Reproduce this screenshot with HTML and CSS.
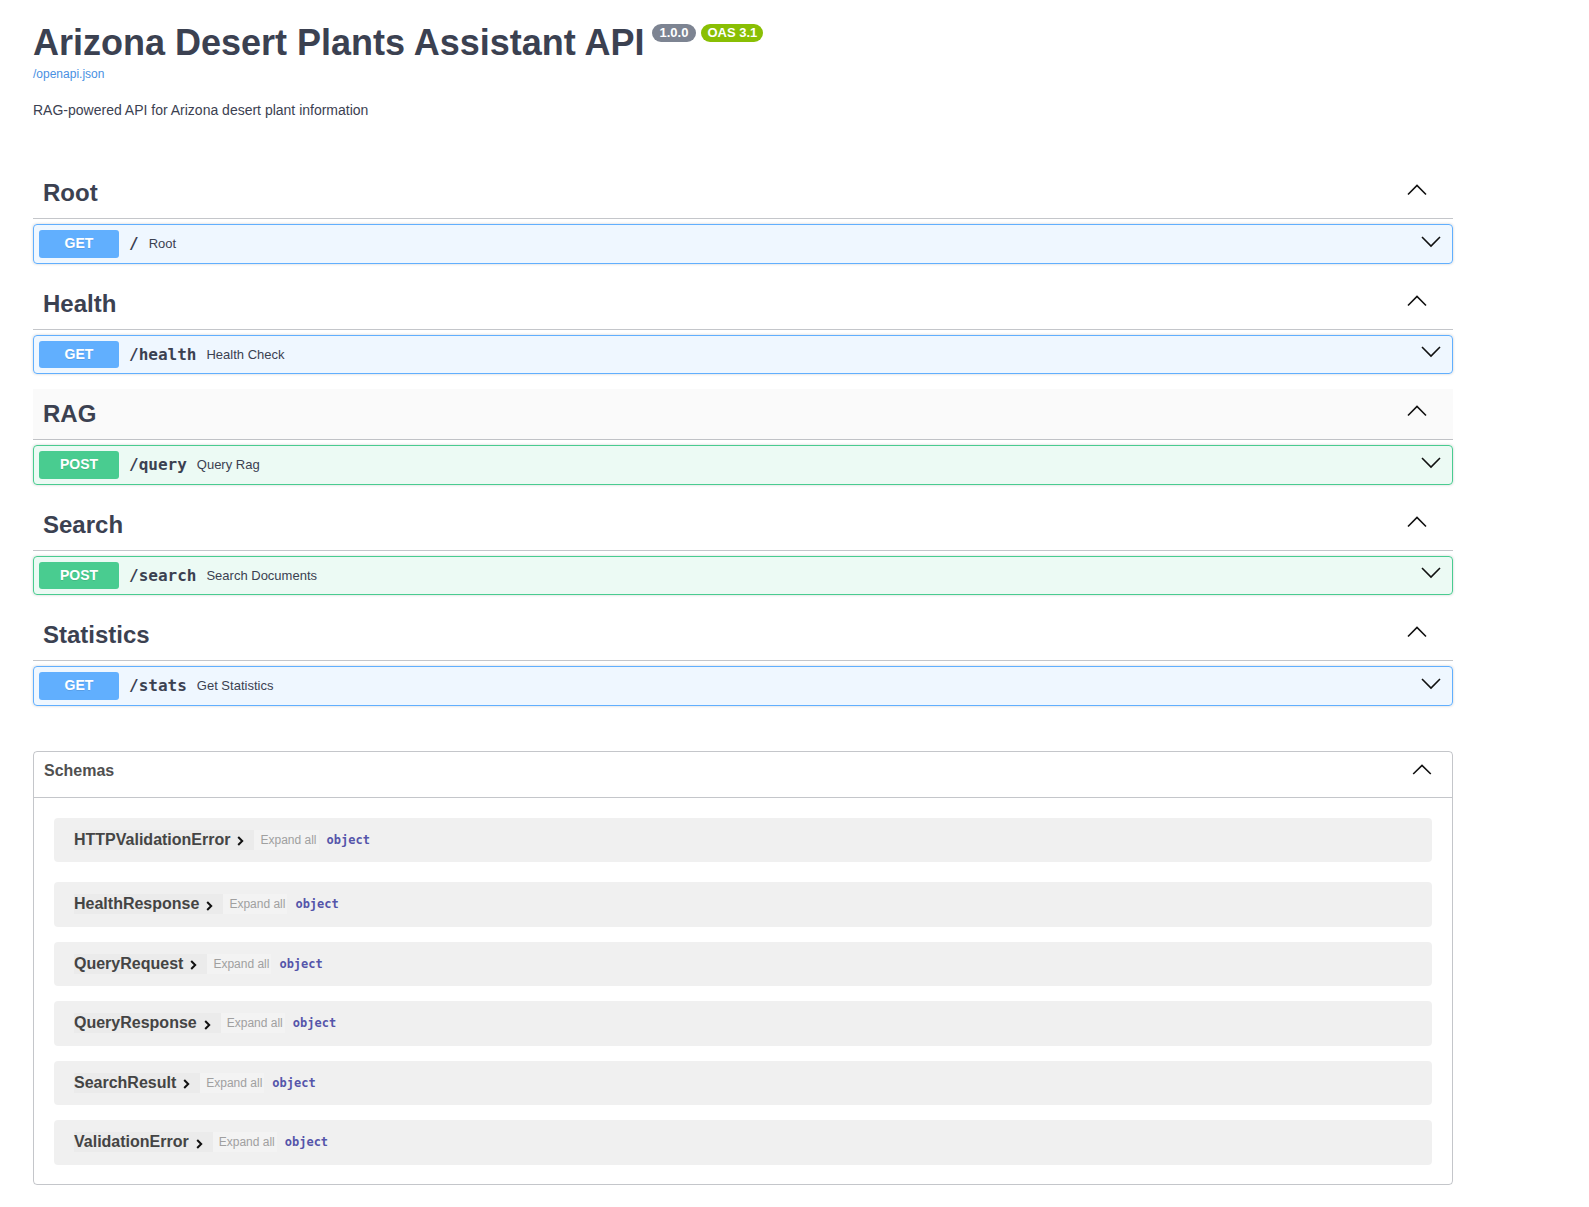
FILE: index.html
```html
<!DOCTYPE html>
<html lang="en">
<head>
<meta charset="utf-8">
<title>Arizona Desert Plants Assistant API - Swagger UI</title>
<link rel="stylesheet" href="styles.css">
</head>
<body>
<div class="wrapper">
  <header class="info">
    <div class="title-row">
      <h2 class="title">Arizona Desert Plants Assistant API</h2>
      <span class="badge badge-version">1.0.0</span>
      <span class="badge badge-oas">OAS 3.1</span>
    </div>
    <a class="spec-link" href="#">/openapi.json</a>
    <p class="description">RAG-powered API for Arizona desert plant information</p>
  </header>

  <div class="tags">
    <section class="tag-section">
      <h3 class="tag"><span class="tag-name">Root</span><svg class="tag-arrow" width="20" height="20" viewBox="0 0 20 20"><polyline points="1,11.5 10,2.5 19,11.5"/></svg></h3>
      <div class="opblock opblock-get">
        <span class="method">GET</span><span class="path">/</span><span class="summary">Root</span>
        <svg class="op-arrow" width="20" height="20" viewBox="0 0 20 20"><polyline points="1,3 10,12 19,3"/></svg>
      </div>
    </section>

    <section class="tag-section">
      <h3 class="tag"><span class="tag-name">Health</span><svg class="tag-arrow" width="20" height="20" viewBox="0 0 20 20"><polyline points="1,11.5 10,2.5 19,11.5"/></svg></h3>
      <div class="opblock opblock-get">
        <span class="method">GET</span><span class="path">/health</span><span class="summary">Health Check</span>
        <svg class="op-arrow" width="20" height="20" viewBox="0 0 20 20"><polyline points="1,3 10,12 19,3"/></svg>
      </div>
    </section>

    <section class="tag-section">
      <h3 class="tag tag-hover"><span class="tag-name">RAG</span><svg class="tag-arrow" width="20" height="20" viewBox="0 0 20 20"><polyline points="1,11.5 10,2.5 19,11.5"/></svg></h3>
      <div class="opblock opblock-post">
        <span class="method">POST</span><span class="path">/query</span><span class="summary">Query Rag</span>
        <svg class="op-arrow" width="20" height="20" viewBox="0 0 20 20"><polyline points="1,3 10,12 19,3"/></svg>
      </div>
    </section>

    <section class="tag-section">
      <h3 class="tag"><span class="tag-name">Search</span><svg class="tag-arrow" width="20" height="20" viewBox="0 0 20 20"><polyline points="1,11.5 10,2.5 19,11.5"/></svg></h3>
      <div class="opblock opblock-post">
        <span class="method">POST</span><span class="path">/search</span><span class="summary">Search Documents</span>
        <svg class="op-arrow" width="20" height="20" viewBox="0 0 20 20"><polyline points="1,3 10,12 19,3"/></svg>
      </div>
    </section>

    <section class="tag-section">
      <h3 class="tag"><span class="tag-name">Statistics</span><svg class="tag-arrow" width="20" height="20" viewBox="0 0 20 20"><polyline points="1,11.5 10,2.5 19,11.5"/></svg></h3>
      <div class="opblock opblock-get">
        <span class="method">GET</span><span class="path">/stats</span><span class="summary">Get Statistics</span>
        <svg class="op-arrow" width="20" height="20" viewBox="0 0 20 20"><polyline points="1,3 10,12 19,3"/></svg>
      </div>
    </section>
  </div>

  <section class="models">
    <h4 class="models-header"><span class="models-title">Schemas</span><svg class="models-arrow" width="20" height="20" viewBox="0 0 20 20"><polyline points="1.2,12 10,3.4 18.8,12"/></svg></h4>
    <div class="models-list">
      <div class="model">
        <span class="model-name">HTTPValidationError<svg class="model-toggle" width="7" height="10" viewBox="0 0 7 10"><polyline points="1.2,1 5.2,5 1.2,9"/></svg></span><span class="expand-all">Expand all</span><span class="model-type">object</span>
      </div>
      <div class="model">
        <span class="model-name">HealthResponse<svg class="model-toggle" width="7" height="10" viewBox="0 0 7 10"><polyline points="1.2,1 5.2,5 1.2,9"/></svg></span><span class="expand-all">Expand all</span><span class="model-type">object</span>
      </div>
      <div class="model">
        <span class="model-name">QueryRequest<svg class="model-toggle" width="7" height="10" viewBox="0 0 7 10"><polyline points="1.2,1 5.2,5 1.2,9"/></svg></span><span class="expand-all">Expand all</span><span class="model-type">object</span>
      </div>
      <div class="model">
        <span class="model-name">QueryResponse<svg class="model-toggle" width="7" height="10" viewBox="0 0 7 10"><polyline points="1.2,1 5.2,5 1.2,9"/></svg></span><span class="expand-all">Expand all</span><span class="model-type">object</span>
      </div>
      <div class="model">
        <span class="model-name">SearchResult<svg class="model-toggle" width="7" height="10" viewBox="0 0 7 10"><polyline points="1.2,1 5.2,5 1.2,9"/></svg></span><span class="expand-all">Expand all</span><span class="model-type">object</span>
      </div>
      <div class="model">
        <span class="model-name">ValidationError<svg class="model-toggle" width="7" height="10" viewBox="0 0 7 10"><polyline points="1.2,1 5.2,5 1.2,9"/></svg></span><span class="expand-all">Expand all</span><span class="model-type">object</span>
      </div>
    </div>
  </section>
</div>
</body>
</html>
```

FILE: styles.css
```css
* {
  box-sizing: border-box;
}

html, body {
  margin: 0;
  padding: 0;
  background: #fff;
}

body {
  font-family: "Liberation Sans", Arial, Helvetica, sans-serif;
  color: #3b4151;
}

.wrapper {
  width: 1420px;
  margin-left: 33px;
  padding-top: 21px;
  padding-bottom: 20px;
}

/* ---------- info header ---------- */
.title-row {
  display: flex;
  align-items: flex-start;
}

.title {
  margin: 0;
  font-size: 36px;
  line-height: 44px;
  font-weight: 700;
  color: #3b4151;
}

.badge {
  display: inline-flex;
  align-items: center;
  height: 18px;
  margin-top: 3px;
  border-radius: 57px;
  color: #fff;
  font-size: 13px;
  font-weight: 700;
  line-height: 18px;
}

.badge-version {
  margin-left: 7px;
  padding: 0 8px;
  background: #7d8492;
}

.badge-oas {
  margin-left: 5px;
  padding: 0 6px;
  background: #89bf04;
}

.spec-link {
  display: block;
  margin-top: 2px;
  font-size: 12px;
  line-height: 15px;
  color: #4990e2;
  text-decoration: none;
}

.description {
  margin: 18px 0 0;
  font-size: 14px;
  line-height: 20px;
  color: #3b4151;
}

/* ---------- tag sections ---------- */
.tags {
  margin-top: 48px;
}

.tag-section {
  display: flex;
  flex-direction: column;
}

.tag {
  display: flex;
  align-items: center;
  margin: 0 0 5px;
  padding: 10px 26px 10px 10px;
  border-bottom: 1px solid rgba(59, 65, 81, 0.3);
  font-size: 24px;
  line-height: 30px;
  font-weight: 700;
  color: #3b4151;
}

.tag-hover {
  background: rgba(0, 0, 0, 0.02);
}

.tag-name {
  flex: 1;
}

.tag-arrow,
.op-arrow,
.models-arrow {
  flex: none;
  fill: none;
  stroke: #111;
  stroke-width: 1.6;
}

.opblock {
  display: flex;
  align-items: center;
  height: 39.5px;
  margin: 0 0 15px;
  padding: 0 5px;
  border: 1px solid;
  border-radius: 4px;
  box-shadow: 0 0 3px rgba(0, 0, 0, 0.19);
}

.opblock-get {
  background: rgba(97, 175, 254, 0.1);
  border-color: #61affe;
}

.opblock-post {
  background: rgba(73, 204, 144, 0.1);
  border-color: #49cc90;
}

.method {
  flex: none;
  width: 80px;
  height: 27.5px;
  border-radius: 3px;
  color: #fff;
  font-size: 14px;
  font-weight: 700;
  line-height: 27.5px;
  text-align: center;
  text-shadow: 0 1px 0 rgba(0, 0, 0, 0.1);
}

.opblock-get .method {
  background: #61affe;
}

.opblock-post .method {
  background: #49cc90;
}

.path {
  padding: 0 10px;
  font-family: "DejaVu Sans Mono", "Liberation Mono", monospace;
  font-size: 16px;
  font-weight: 700;
  color: #3b4151;
}

.summary {
  flex: 1;
  font-size: 13px;
  color: #3b4151;
}

.op-arrow {
  margin-right: 6px;
}

/* ---------- models ---------- */
.models {
  margin-top: 30px;
  border: 1px solid rgba(59, 65, 81, 0.3);
  border-radius: 4px;
}

.models-header {
  display: flex;
  align-items: center;
  height: 46px;
  margin: 0;
  padding: 0 20px 0 10px;
  border-bottom: 1px solid rgba(59, 65, 81, 0.3);
  font-size: 16px;
  font-weight: 700;
  color: #505050;
}

.models-title {
  flex: 1;
  line-height: 20px;
  margin-bottom: 6px;
}

.models-arrow {
  margin-bottom: 4px;
}

.models-list {
  padding: 20px 20px 4px;
}

.model {
  display: flex;
  align-items: center;
  height: 44.5px;
  margin-bottom: 15px;
  padding: 0 20px;
  border-radius: 4px;
  background: rgba(0, 0, 0, 0.06);
}

.model:first-child {
  margin-bottom: 20px;
}

.model-name {
  display: inline-flex;
  align-items: center;
  height: 20px;
  padding-right: 10px;
  background: rgba(0, 0, 0, 0.02);
  font-size: 16px;
  line-height: 20px;
  font-weight: 700;
  color: #444;
}

.model-toggle {
  margin-left: 7px;
  margin-top: 3px;
  fill: none;
  stroke: #111;
  stroke-width: 2;
}

.expand-all {
  height: 20px;
  padding: 0 2px 0 6px;
  background: rgba(255, 255, 255, 0.2);
  font-size: 12px;
  line-height: 20px;
  color: #a0a0a0;
}

.model-type {
  margin-left: 8px;
  font-family: "DejaVu Sans Mono", "Liberation Mono", monospace;
  font-size: 12px;
  font-weight: 700;
  color: #55a;
}
```
